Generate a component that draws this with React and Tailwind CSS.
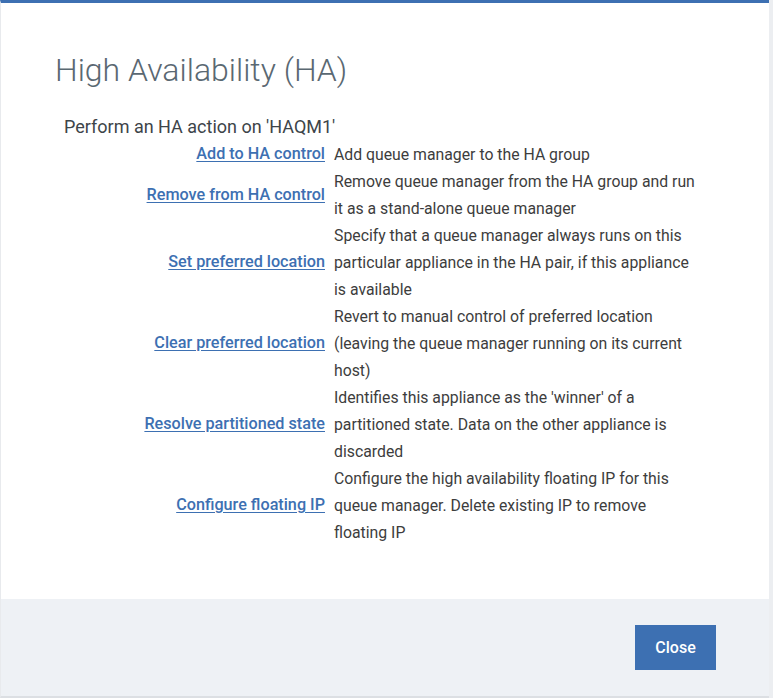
const actions = [
  { label: 'Add to HA control', desc: 'Add queue manager to the HA group' },
  { label: 'Remove from HA control', desc: 'Remove queue manager from the HA group and run it as a stand-alone queue manager' },
  { label: 'Set preferred location', desc: 'Specify that a queue manager always runs on this particular appliance in the HA pair, if this appliance is available' },
  { label: 'Clear preferred location', desc: 'Revert to manual control of preferred location (leaving the queue manager running on its current host)' },
  { label: 'Resolve partitioned state', desc: "Identifies this appliance as the 'winner' of a partitioned state. Data on the other appliance is discarded" },
  { label: 'Configure floating IP', desc: 'Configure the high availability floating IP for this queue manager. Delete existing IP to remove floating IP' },
];

export default function App() {
  return (
    <div className="flex h-[698px] w-[773px] bg-[#eceef1] font-['Roboto',sans-serif]">
      <div className="flex w-[769px] flex-col border-t-[3px] border-l border-b-2 border-[#3d70b2] border-l-[#e8eaed] border-b-[#dcdfe3] bg-white">
        <div className="flex-1 pl-[54px] pt-[49px]">
          <h1 className="text-[32px] font-light leading-[36px] text-[#5a6872]">High Availability (HA)</h1>
          <p className="mt-[28px] pl-[9px] text-[18px] leading-[22px] text-[#3d4449]">Perform an HA action on 'HAQM1'</p>
          <div className="mt-[3px] flex flex-col">
            {actions.map((a) => (
              <div key={a.label} className="flex items-center">
                <div className="w-[270px] shrink-0 text-right">
                  <a href="#" className="text-[16.2px] font-medium text-[#3d70b2] underline underline-offset-2">{a.label}</a>
                </div>
                <p className="ml-[9px] w-[366px] text-[15.8px] leading-[27px] text-[#3d3d3d]">{a.desc}</p>
              </div>
            ))}
          </div>
        </div>
        <div className="flex h-[97px] items-center justify-end bg-[#eef1f5] pr-[53px]">
          <button className="h-[45px] w-[81px] bg-[#3d70b2] text-[16px] font-medium text-white">Close</button>
        </div>
      </div>
    </div>
  );
}
